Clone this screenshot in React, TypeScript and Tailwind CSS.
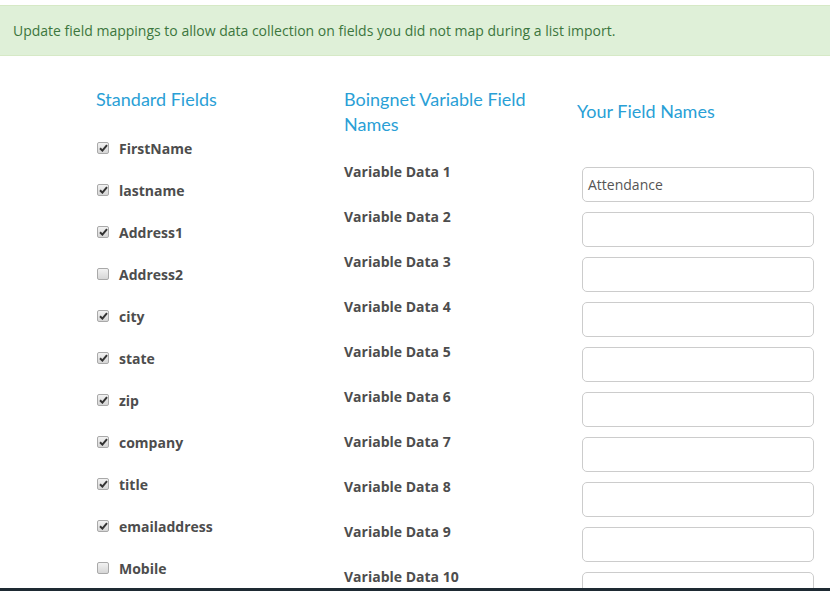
import React from "react";

const fields: [string, boolean][] = [
  ["FirstName", true],
  ["lastname", true],
  ["Address1", true],
  ["Address2", false],
  ["city", true],
  ["state", true],
  ["zip", true],
  ["company", true],
  ["title", true],
  ["emailaddress", true],
  ["Mobile", false],
];

function Box({ checked }: { checked: boolean }) {
  return (
    <span className="flex h-[12px] w-[12px] items-center justify-center rounded-[2px] border border-[#a9a9a9] bg-gradient-to-b from-[#f2f2f2] to-[#d6d6d6]">
      {checked && (
        <svg width="9" height="8" viewBox="0 0 9 8">
          <path d="M1 4.2 L3.4 6.6 L8 1.2" fill="none" stroke="#333" strokeWidth="2" />
        </svg>
      )}
    </span>
  );
}

export default function App() {
  const head = "font-['Lato','Open_Sans',sans-serif] text-[18px] leading-[25px] text-[#2a9fd6]";
  return (
    <div className="relative h-[591px] w-[830px] overflow-hidden bg-white font-['Open_Sans',sans-serif]">
      <div className="mt-[5px] flex h-[51px] items-center border-y border-[#d6e9c6] bg-[#dff0d8] pl-[13px] text-[14px] text-[#3c763d]">
        Update field mappings to allow data collection on fields you did not map during a list import.
      </div>
      <div className="flex pl-[96px]">
        <div className="w-[248px] pt-[31px]">
          <div className={head}>Standard Fields</div>
          <div className="mt-[15px]">
            {fields.map(([n, c]) => (
              <div key={n} className="flex h-[42px] items-center gap-[10px] pl-[1px]">
                <Box checked={c} />
                <span className="text-[14px] font-bold text-[#4d4d4d]">{n}</span>
              </div>
            ))}
          </div>
        </div>
        <div className="w-[233px] pt-[31px]">
          <div className={head}>
            Boingnet Variable Field
            <br />
            Names
          </div>
          <div className="mt-[12px]">
            {Array.from({ length: 10 }, (_, i) => (
              <div key={i} className="flex h-[45px] items-center text-[14px] font-bold text-[#4d4d4d]">
                Variable Data {i + 1}
              </div>
            ))}
          </div>
        </div>
        <div className="w-[240px] pt-[43px]">
          <div className={head}>Your Field Names</div>
          <div className="mt-[43px] flex flex-col gap-[10px] pl-[5px]">
            {Array.from({ length: 10 }, (_, i) => (
              <div
                key={i}
                className="flex h-[35px] w-[232px] shrink-0 items-center rounded-[5px] border border-[#cccccc] bg-white pl-[5px] text-[14px] text-[#555]"
              >
                {i === 0 ? "Attendance" : ""}
              </div>
            ))}
          </div>
        </div>
      </div>
      <div className="absolute bottom-0 left-0 h-[3px] w-full bg-[#1e2a33]" />
    </div>
  );
}
